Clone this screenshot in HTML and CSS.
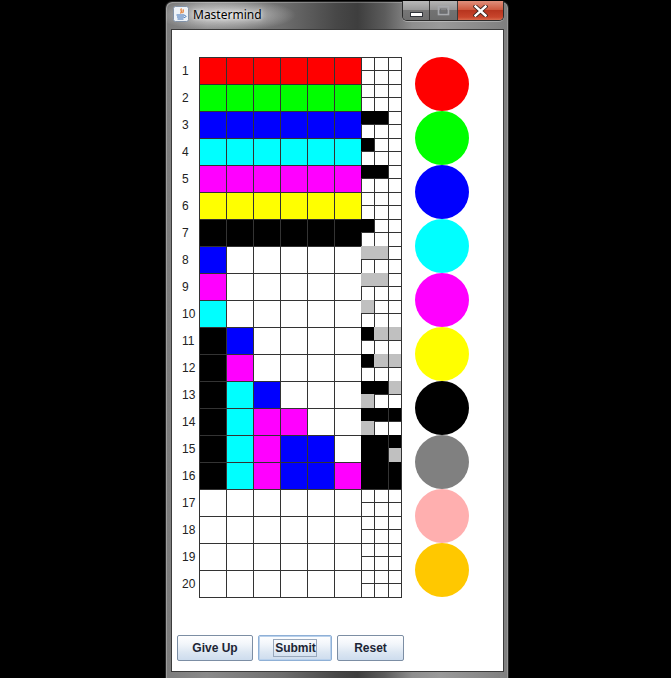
FILE: index.html
```html
<!DOCTYPE html>
<html>
<head>
<meta charset="utf-8">
<title>Mastermind</title>
<link rel="stylesheet" href="styles.css">
</head>
<body>
<div class="window">
  <div class="titlebar">
    <svg class="appicon" width="16" height="16" viewBox="0 0 16 16">
      <rect x="0.5" y="0.5" width="15" height="15" rx="2" fill="#eef3f8" stroke="#8393a8"/>
      <path d="M8.5 2.5 C6.5 4 10 5 7.5 7.5 M10.5 3.5 C9.5 4.5 11 5.5 9.5 7" stroke="#e2701e" stroke-width="1.2" fill="none"/>
      <path d="M3.5 9 H11.5 M4 11 H11 M4.5 13 H10.5 M11.5 9.5 C13.5 9.5 13.5 11.5 11 11.5" stroke="#3a6fb5" stroke-width="1" fill="none"/>
    </svg>
    <span class="title">Mastermind</span>
    <div class="controls">
      <div class="ctl min">
        <svg width="13" height="6" viewBox="0 0 13 6"><rect x="0.5" y="1.5" width="12" height="4" fill="#fff" stroke="#30343a"/></svg>
      </div>
      <div class="ctl max">
        <svg width="13" height="11" viewBox="0 0 13 11"><rect x="1.5" y="1.5" width="10" height="8" fill="none" stroke="#a7a9ad" stroke-width="1.6"/><rect x="3.5" y="4" width="6" height="4" fill="none" stroke="#6a6d72" stroke-width="0.8"/></svg>
      </div>
      <div class="ctl close">
        <svg width="15" height="12" viewBox="0 0 15 12"><path d="M2.5 1.5 L12.5 10.5 M12.5 1.5 L2.5 10.5" stroke="#3a2520" stroke-width="4.2" stroke-linecap="square"/><path d="M2.5 1.5 L12.5 10.5 M12.5 1.5 L2.5 10.5" stroke="#ffffff" stroke-width="2.4" stroke-linecap="square"/></svg>
      </div>
    </div>
  </div>
  <div class="client">
    <div class="main">
      <div class="labels">
        <span>1</span><span>2</span><span>3</span><span>4</span><span>5</span>
        <span>6</span><span>7</span><span>8</span><span>9</span><span>10</span>
        <span>11</span><span>12</span><span>13</span><span>14</span><span>15</span>
        <span>16</span><span>17</span><span>18</span><span>19</span><span>20</span>
      </div>
      <div class="board">
        <div class="row"><i class="r"></i><i class="r"></i><i class="r"></i><i class="r"></i><i class="r"></i><i class="r"></i><div class="fb"><b></b><b></b><b></b><b></b><b></b><b></b></div></div>
        <div class="row"><i class="g"></i><i class="g"></i><i class="g"></i><i class="g"></i><i class="g"></i><i class="g"></i><div class="fb"><b></b><b></b><b></b><b></b><b></b><b></b></div></div>
        <div class="row"><i class="b"></i><i class="b"></i><i class="b"></i><i class="b"></i><i class="b"></i><i class="b"></i><div class="fb"><b class="k"></b><b class="k"></b><b></b><b></b><b></b><b></b></div></div>
        <div class="row"><i class="c"></i><i class="c"></i><i class="c"></i><i class="c"></i><i class="c"></i><i class="c"></i><div class="fb"><b class="k"></b><b></b><b></b><b></b><b></b><b></b></div></div>
        <div class="row"><i class="m"></i><i class="m"></i><i class="m"></i><i class="m"></i><i class="m"></i><i class="m"></i><div class="fb"><b class="k"></b><b class="k"></b><b></b><b></b><b></b><b></b></div></div>
        <div class="row"><i class="y"></i><i class="y"></i><i class="y"></i><i class="y"></i><i class="y"></i><i class="y"></i><div class="fb"><b></b><b></b><b></b><b></b><b></b><b></b></div></div>
        <div class="row"><i class="k"></i><i class="k"></i><i class="k"></i><i class="k"></i><i class="k"></i><i class="k"></i><div class="fb"><b class="k"></b><b></b><b></b><b></b><b></b><b></b></div></div>
        <div class="row"><i class="b"></i><i></i><i></i><i></i><i></i><i></i><div class="fb"><b class="s"></b><b class="s"></b><b></b><b></b><b></b><b></b></div></div>
        <div class="row"><i class="m"></i><i></i><i></i><i></i><i></i><i></i><div class="fb"><b class="s"></b><b class="s"></b><b></b><b></b><b></b><b></b></div></div>
        <div class="row"><i class="c"></i><i></i><i></i><i></i><i></i><i></i><div class="fb"><b class="s"></b><b></b><b></b><b></b><b></b><b></b></div></div>
        <div class="row"><i class="k"></i><i class="b"></i><i></i><i></i><i></i><i></i><div class="fb"><b class="k"></b><b class="s"></b><b class="s"></b><b></b><b></b><b></b></div></div>
        <div class="row"><i class="k"></i><i class="m"></i><i></i><i></i><i></i><i></i><div class="fb"><b class="k"></b><b class="s"></b><b class="s"></b><b></b><b></b><b></b></div></div>
        <div class="row"><i class="k"></i><i class="c"></i><i class="b"></i><i></i><i></i><i></i><div class="fb"><b class="k"></b><b class="k"></b><b class="s"></b><b class="s"></b><b></b><b></b></div></div>
        <div class="row"><i class="k"></i><i class="c"></i><i class="m"></i><i class="m"></i><i></i><i></i><div class="fb"><b class="k"></b><b class="k"></b><b class="k"></b><b class="s"></b><b></b><b></b></div></div>
        <div class="row"><i class="k"></i><i class="c"></i><i class="m"></i><i class="b"></i><i class="b"></i><i></i><div class="fb"><b class="k"></b><b class="k"></b><b class="k"></b><b class="k"></b><b class="k"></b><b class="s"></b></div></div>
        <div class="row"><i class="k"></i><i class="c"></i><i class="m"></i><i class="b"></i><i class="b"></i><i class="m"></i><div class="fb"><b class="k"></b><b class="k"></b><b class="k"></b><b class="k"></b><b class="k"></b><b class="k"></b></div></div>
        <div class="row"><i></i><i></i><i></i><i></i><i></i><i></i><div class="fb"><b></b><b></b><b></b><b></b><b></b><b></b></div></div>
        <div class="row"><i></i><i></i><i></i><i></i><i></i><i></i><div class="fb"><b></b><b></b><b></b><b></b><b></b><b></b></div></div>
        <div class="row"><i></i><i></i><i></i><i></i><i></i><i></i><div class="fb"><b></b><b></b><b></b><b></b><b></b><b></b></div></div>
        <div class="row"><i></i><i></i><i></i><i></i><i></i><i></i><div class="fb"><b></b><b></b><b></b><b></b><b></b><b></b></div></div>
      </div>
      <div class="palette">
        <span class="dot d-red"></span>
        <span class="dot d-green"></span>
        <span class="dot d-blue"></span>
        <span class="dot d-cyan"></span>
        <span class="dot d-magenta"></span>
        <span class="dot d-yellow"></span>
        <span class="dot d-black"></span>
        <span class="dot d-gray"></span>
        <span class="dot d-pink"></span>
        <span class="dot d-orange"></span>
      </div>
    </div>
    <div class="buttons">
      <button class="btn giveup">Give Up</button>
      <button class="btn submit"><span class="focus">Submit</span></button>
      <button class="btn reset">Reset</button>
    </div>
  </div>
</div>
</body>
</html>
```

FILE: styles.css
```css
html, body {
  margin: 0;
  padding: 0;
}
body {
  background: #000;
  width: 671px;
  height: 678px;
  overflow: hidden;
  font-family: "Liberation Sans", Arial, sans-serif;
}

.window {
  box-sizing: border-box;
  width: 344px;
  height: 677px;
  margin: 1px 0 0 165px;
  border: 1px solid #232323;
  border-bottom: none;
  border-radius: 7px 7px 0 0;
  padding: 0 4px 5px 5px;
  display: flex;
  flex-direction: column;
  background:
    radial-gradient(ellipse 70px 16px at 60px 13px, rgba(230,230,230,0.85), rgba(200,200,200,0) 100%),
    linear-gradient(90deg, #7c7c7c 0%, #8a8a8a 12%, #6e6e6e 34%, #474747 50%, #3e3e3e 56%, #5c5c5c 64%, #8e8e8e 72%, #9a9a9a 80%, #7f7f7f 100%);
  box-shadow: inset 1px 1px 0 rgba(255,255,255,0.25), inset -1px 0 0 rgba(255,255,255,0.2);
}

.titlebar {
  height: 27px;
  display: flex;
  align-items: flex-start;
}
.appicon {
  margin: 4px 0 0 2px;
  flex: none;
}
.title {
  margin: 4px 0 0 4px;
  font-family: "Noto Sans", "Open Sans", sans-serif;
  font-size: 12px;
  line-height: 17px;
  color: #000;
  text-shadow: 0 0 6px rgba(255,255,255,0.9), 0 0 3px rgba(255,255,255,0.7);
}
.controls {
  margin: -1px 0 0 auto;
  display: flex;
  height: 19px;
  border: 1px solid #2c2c2c;
  border-top: none;
  border-radius: 0 0 5px 5px;
  overflow: hidden;
  box-shadow: 0 1px 0 rgba(255,255,255,0.3);
}
.ctl {
  height: 19px;
  display: flex;
  align-items: center;
  justify-content: center;
}
.min {
  width: 26px;
  border-right: 1px solid #3a3a3a;
  background: linear-gradient(#b9b9b9, #9a9a9a 45%, #777 50%, #6f6f6f 100%);
}
.min svg { margin-top: 6px; }
.max {
  width: 27px;
  border-right: 1px solid #3a3a3a;
  background: linear-gradient(#b4b4b4, #969696 45%, #727272 50%, #6c6c6c 100%);
}
.close {
  width: 45px;
  background: linear-gradient(#e0907c, #cf5a40 45%, #b8351f 50%, #c8452c 85%, #d86a4c 100%);
}

.client {
  box-sizing: border-box;
  width: 333px;
  height: 643px;
  border: 1px solid #3b3b3b;
  background: #fff;
  display: flex;
  flex-direction: column;
}

.main {
  display: flex;
  padding-top: 27px;
}

.labels {
  width: 27px;
  box-sizing: border-box;
  padding-left: 10px;
  display: flex;
  flex-direction: column;
}
.labels span {
  height: 27px;
  line-height: 27px;
  padding-top: 1px;
  box-sizing: border-box;
  font-size: 12px;
  color: #222;
}

.board {
  background: #333;
  padding: 1px;
  display: flex;
  flex-direction: column;
  gap: 1px;
}
.row {
  display: flex;
  gap: 1px;
  height: 26px;
}
.row i {
  width: 26px;
  height: 26px;
  background: #fff;
}
.row i.r { background: #ff0000; }
.row i.g { background: #00ff00; }
.row i.b { background: #0000ff; }
.row i.c { background: #00ffff; }
.row i.m { background: #ff00ff; }
.row i.y { background: #ffff00; }
.row i.k { background: #000; }

.fb {
  width: 39px;
  height: 26px;
  display: grid;
  grid-template-columns: 12px 13px 12px;
  grid-template-rows: 12px 13px;
  gap: 1px;
}
.fb b {
  background: #fff;
}
.fb b.k {
  background: #000;
  box-shadow: -1px 0 0 #000, 0 -1px 0 #000, -1px -1px 0 #000;
}
.fb b.s {
  background: #c0c0c0;
  box-shadow: -1px 0 0 #c0c0c0, 0 -1px 0 #c0c0c0, -1px -1px 0 #c0c0c0;
}
.fb b.k:nth-child(3n) {
  box-shadow: 0 -1px 0 #000;
}
.fb b.s:nth-child(3n) {
  box-shadow: 0 -1px 0 #c0c0c0;
}

.palette {
  margin-left: 13px;
  display: flex;
  flex-direction: column;
}
.dot {
  width: 54px;
  height: 54px;
  border-radius: 50%;
}
.d-red { background: #ff0000; }
.d-green { background: #00ff00; }
.d-blue { background: #0000ff; }
.d-cyan { background: #00ffff; }
.d-magenta { background: #ff00ff; }
.d-yellow { background: #ffff00; }
.d-black { background: #000; }
.d-gray { background: #808080; }
.d-pink { background: #ffafaf; }
.d-orange { background: #ffc800; }

.buttons {
  display: flex;
  gap: 5px;
  padding-left: 5px;
  margin-top: 37px;
}
.btn {
  box-sizing: border-box;
  height: 26px;
  padding: 0;
  margin: 0;
  border: 1px solid #7c8ea4;
  border-radius: 2px;
  background: linear-gradient(#ffffff 0%, #f1f5fa 35%, #dbe6f2 70%, #cddcee 100%);
  font-family: "Liberation Sans", Arial, sans-serif;
  font-weight: bold;
  font-size: 12px;
  color: #1c2535;
  display: flex;
  align-items: center;
  justify-content: center;
}
.giveup { width: 76px; }
.submit {
  width: 74px;
  border-color: #8fb0d6;
  box-shadow: inset 0 0 0 1px #b9d1ec;
}
.reset { width: 67px; }
.focus {
  border: 1px solid #98a8bc;
  padding: 1px 0 1px 1px;
  line-height: 14px;
}
```
